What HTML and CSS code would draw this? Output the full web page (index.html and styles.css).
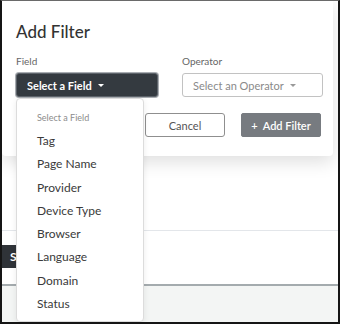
FILE: index.html
```html
<!DOCTYPE html>
<html>
<head>
<meta charset="utf-8">
<link rel="stylesheet" href="styles.css">
</head>
<body>
<div class="page">
  <div class="top"></div>
  <div class="rule"></div>
  <div class="bar-area"><span class="save-btn">Save</span></div>
  <div class="rule2"></div>
  <div class="footer"></div>
</div>

<div class="modal">
  <h2 class="title">Add Filter</h2>
  <div class="fields">
    <div class="col field-col">
      <div class="label">Field</div>
      <button class="btn-field">Select a Field <span class="caret"></span></button>
      <div class="menu">
        <div class="menu-header">Select a Field</div>
        <div class="item">Tag</div>
        <div class="item">Page Name</div>
        <div class="item">Provider</div>
        <div class="item">Device Type</div>
        <div class="item">Browser</div>
        <div class="item">Language</div>
        <div class="item">Domain</div>
        <div class="item">Status</div>
      </div>
    </div>
    <div class="col">
      <div class="label">Operator</div>
      <button class="btn-op">Select an Operator <span class="caret caret-gray"></span></button>
    </div>
  </div>
  <div class="actions">
    <button class="btn-cancel">Cancel</button>
    <button class="btn-add">+&nbsp; Add Filter</button>
  </div>
</div>
</body>
</html>
```
FILE: styles.css
```css
* { box-sizing: border-box; }
html, body { margin: 0; padding: 0; }
body {
  width: 340px;
  height: 324px;
  border-top: 1px solid #6a6a6a;
  border-left: 2px solid #151515;
  border-right: 2px solid #151515;
  border-bottom: 2px solid #151515;
  position: relative;
  overflow: hidden;
  font-family: Lato, "Open Sans", sans-serif;
  background: #fff;
}
.page { display: flex; flex-direction: column; height: 100%; }
.top { height: 229px; background: #fff; }
.rule { height: 1px; background: #e3e6ea; }
.bar-area { height: 53px; padding-top: 14px; }
.save-btn {
  display: inline-block;
  height: 23px;
  width: 60px;
  background: #2f3338;
  color: #fff;
  font-size: 12px;
  font-weight: 700;
  line-height: 23px;
  padding-left: 8px;
}
.rule2 { height: 2px; background: #a4abae; }
.footer { flex: 1; background: #f3f5f4; }

.modal {
  position: absolute;
  top: 0;
  left: 0;
  width: 331px;
  height: 155px;
  background: #fff;
  box-shadow: 0 6px 18px rgba(0,0,0,0.13);
  border-radius: 0 0 4px 4px;
  padding: 21px 12px 0 14px;
}
.title {
  margin: 0;
  font-size: 17px;
  line-height: 20px;
  font-weight: 500;
  color: #333;
}
.fields { display: flex; gap: 24px; margin-top: 12px; }
.col { width: 141px; position: relative; }
.field-col { width: 142px; }
.label { font-size: 10px; line-height: 14px; color: #666; margin-bottom: 5px; }
button { font-family: inherit; cursor: pointer; }
.btn-field {
  width: 142px;
  height: 24px;
  background: #343a40;
  color: #fff;
  border: 1px solid #5d636a;
  border-radius: 3px;
  box-shadow: 0 0 0 1px #a9adb2;
  font-size: 11px;
  font-weight: 700;
  text-align: left;
  padding: 0 0 0 10px;
  display: flex;
  align-items: center;
}
.btn-op {
  width: 141px;
  height: 24px;
  background: #fff;
  color: #8a8a8a;
  border: 1px solid #c2c2c2;
  border-radius: 3px;
  font-size: 11px;
  text-align: left;
  padding: 0 0 0 10px;
  display: flex;
  align-items: center;
}
.caret {
  display: inline-block;
  width: 0; height: 0;
  border-top: 3px solid #fff;
  border-left: 3px solid transparent;
  border-right: 3px solid transparent;
  margin-left: 6px;
}
.caret-gray { border-top-color: #999; }

.menu {
  position: absolute;
  top: 44px;
  left: 0;
  width: 128px;
  height: 224px;
  background: #fff;
  border: 1px solid #dcdcdc;
  border-radius: 4px;
  box-shadow: 0 2px 6px rgba(0,0,0,0.08);
  padding: 12px 0 0 20px;
  z-index: 5;
}
.menu-header { font-size: 9px; line-height: 14px; color: #8c8c8c; margin-bottom: 4px; }
.item { font-size: 12px; line-height: 23.3px; color: #3a3a3a; }

.actions { display: flex; justify-content: flex-end; gap: 16px; margin-top: 16px; }
.btn-cancel {
  width: 80px;
  height: 24px;
  background: #fff;
  border: 1px solid #8f8f8f;
  border-radius: 3px;
  color: #555;
  font-size: 11px;
}
.btn-add {
  width: 80px;
  height: 24px;
  background: #777b80;
  border: 1px solid #777b80;
  border-radius: 2px;
  color: #fff;
  font-size: 11px;
  font-weight: 600;
}
```
